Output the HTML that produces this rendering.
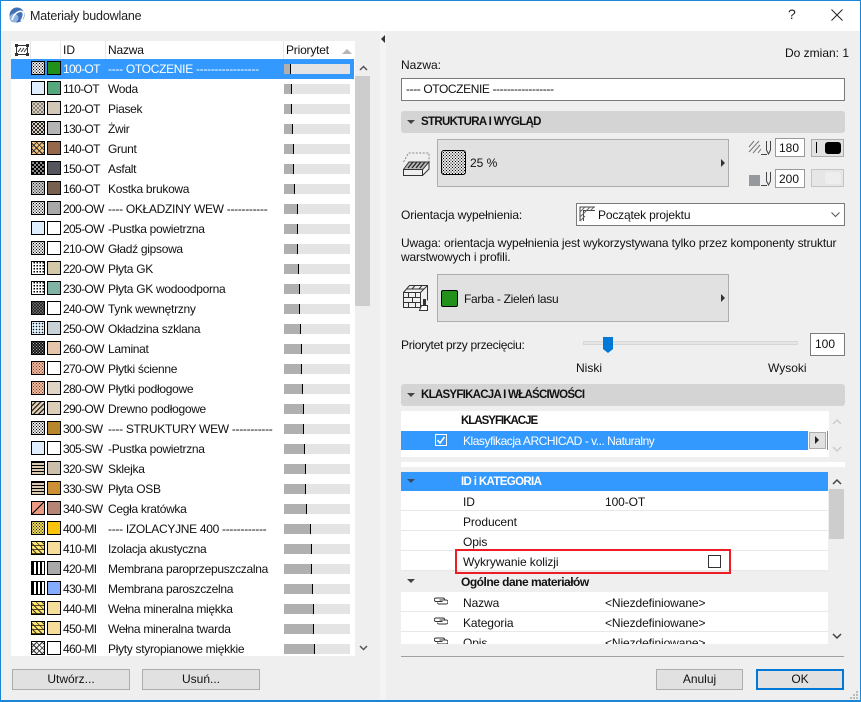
<!DOCTYPE html>
<html lang="pl"><head><meta charset="utf-8"><title>Materiały budowlane</title>
<style>
*{box-sizing:border-box}
html,body{margin:0;padding:0;width:861px;height:702px;overflow:hidden;background:#efefef}
body{font:12px/14px "Liberation Sans",sans-serif;color:#111;position:relative}
.a,.t{position:absolute}
.t{white-space:nowrap}
#win{position:absolute;left:0;top:0;width:861px;height:702px;border:1px solid #1b85d6;border-width:1px 1px 2px 1px;pointer-events:none}
.row{position:absolute;left:11px;width:344px;height:20px}
.s{position:absolute;top:2px;width:14px;height:14px;border:1px solid #000}
.s1{left:20px}.s2{left:36px}
.id{position:absolute;left:52px;top:3px;font-size:12px;letter-spacing:-.65px;white-space:nowrap}
.n{position:absolute;left:97px;top:3px;white-space:nowrap;letter-spacing:-.3px}
.bar{position:absolute;left:273px;top:5px;width:66px;height:10px;background:#e4e4e4}
.bar i{position:absolute;left:0;top:0;height:10px;background:#b0b0b0;border-right:1px solid #000}
.dots{background:radial-gradient(circle,#000 .5px,transparent .85px) 0 0/3px 3px,radial-gradient(circle,#000 .5px,transparent .85px) 1.5px 1.5px/3px 3px,#fff}
.dots-g{background:radial-gradient(circle,#222 .55px,transparent .85px) 0 0/3px 3px,radial-gradient(circle,#222 .55px,transparent .85px) 1.5px 1.5px/3px 3px,#ddd}
.sand{background:radial-gradient(circle,#222 .6px,transparent .9px) 0 0/4px 4px,radial-gradient(circle,#222 .6px,transparent .9px) 2px 2px/4px 4px,#d8ccbb}
.grav{background:radial-gradient(circle,#111 .9px,transparent 1.2px) 0 0/4px 4px,radial-gradient(circle,#111 .9px,transparent 1.2px) 2px 2px/4px 4px,#d8d0c4}
.cross{background:repeating-linear-gradient(45deg,transparent 0 3px,#222 3px 4px),repeating-linear-gradient(135deg,transparent 0 3px,#444 3px 4px),#f5c47a}
.chk{background:conic-gradient(#000 25%,#888 0 50%,#000 0 75%,#888 0) 0 0/4px 4px}
.grid{background:conic-gradient(#000 25%,#fff 0) 0 0/3px 3px}
.gray{background:radial-gradient(circle,#111 .8px,transparent 1.1px) 0 0/3px 3px,radial-gradient(circle,#111 .8px,transparent 1.1px) 1.5px 1.5px/3px 3px,#bbb}
.glass{background:radial-gradient(circle,#111 .6px,transparent .9px) 0 0/3px 3px,#e2f2fc}
.lam{background:radial-gradient(circle,#aaa .5px,transparent .9px) 0 0/3px 3px,radial-gradient(circle,#aaa .5px,transparent .9px) 1.5px 1.5px/3px 3px,#000}
.tile{background:radial-gradient(circle,#733 .5px,transparent .85px) 0 0/3px 3px,radial-gradient(circle,#733 .5px,transparent .85px) 1.5px 1.5px/3px 3px,#fccba6}
.wood{background:repeating-linear-gradient(135deg,#e4d0bc 0 2px,#332 2px 3.500px)}
.lines{background:repeating-linear-gradient(180deg,#000 0 1px,#d8c8b0 1px 3px)}
.vl{background:repeating-linear-gradient(90deg,#000 0 2px,#fff 2px 4px)}
.yel{background:radial-gradient(circle,#222 .5px,transparent .85px) 0 0/3px 3px,radial-gradient(circle,#222 .5px,transparent .85px) 1.5px 1.5px/3px 3px,#ffe85a}
.wool{background:repeating-linear-gradient(45deg,transparent 0 3px,#333 3px 4px) 0 0/100% 100%,repeating-linear-gradient(180deg,#ffe36a 0 3px,#5a4a10 3px 4px)}
.foam{background:repeating-linear-gradient(45deg,transparent 0 3px,#333 3px 4px),repeating-linear-gradient(135deg,transparent 0 3px,#333 3px 4px),#f4f4f4}
.btn{position:absolute;background:#e1e1e1;border:1px solid #adadad}
.btn2{position:absolute;background:#e1e1e1;border:1px solid #adadad;text-align:center;line-height:19px}
.inp{position:absolute;background:#fff;border:1px solid #7a7a7a}
.sec{position:absolute;left:401px;width:444px;background:#d4d4d4;border-radius:3px;font-weight:bold;font-size:11.5px}
.tri{position:absolute;width:0;height:0;border-left:4px solid transparent;border-right:4px solid transparent;border-top:4px solid #444}
.rtri{position:absolute;width:0;height:0;border-top:4px solid transparent;border-bottom:4px solid transparent;border-left:4px solid #333}
.pr{position:absolute;left:401px;width:427px;height:20px;background:#fff;border-bottom:1px solid #e8e8e8}
.pr .l{position:absolute;left:62px;top:4px;white-space:nowrap;letter-spacing:-.1px}
.pr .v{position:absolute;left:204px;top:4px;white-space:nowrap;letter-spacing:-.1px}
</style></head><body>

<!-- title bar -->
<div class="a" style="left:0;top:0;width:861px;height:31px;background:#fff"></div>
<svg class="a" style="left:9px;top:7px" width="18" height="18" viewBox="0 0 18 18"><circle cx="8" cy="8" r="7.500" fill="#3f6fb5"/><circle cx="5" cy="11" r="4.500" fill="#8fb3e0"/><path d="M3 13C5 6 10 3 14 5 15 8 14 11 12 14" fill="none" stroke="#fff" stroke-width="1.600"/></svg>
<div class="t" style="left:30px;top:9px;font-size:12.5px;color:#222;letter-spacing:-.17px">Materiały budowlane</div>
<div class="t" style="left:788px;top:7px;font-size:14px;color:#222">?</div>
<svg class="a" style="left:831px;top:9px" width="12" height="12"><path d="M.5.5l11 11M11.5.5l-11 11" stroke="#222" fill="none"/></svg>

<!-- left list -->
<div class="a" style="left:11px;top:41px;width:344px;height:615px;background:#fff"></div>
<div class="a" style="left:30px;top:41px;width:1px;height:18px;background:#e8e8e8"></div>
<div class="a" style="left:60px;top:41px;width:1px;height:18px;background:#e8e8e8"></div>
<div class="a" style="left:105px;top:41px;width:1px;height:18px;background:#e8e8e8"></div>
<div class="a" style="left:283px;top:41px;width:1px;height:18px;background:#e8e8e8"></div>
<svg class="a" style="left:15px;top:44px" width="14" height="12"><rect x="1.500" y="1.500" width="11" height="9" fill="#fff" stroke="#333"/><path d="M3 8l3-4M6 8l3-4M9 8l3-4" stroke="#333"/><path d="M0 0h3v3H0zM11 0h3v3h-3zM0 9h3v3H0zM11 9h3v3h-3z" fill="#333"/></svg>
<div class="t" style="left:63px;top:43px">ID</div>
<div class="t" style="left:108px;top:43px;letter-spacing:-.2px">Nazwa</div>
<div class="t" style="left:286px;top:43px;letter-spacing:-.2px">Priorytet</div>
<div class="a" style="left:342px;top:49px;width:0;height:0;border-left:5px solid transparent;border-right:5px solid transparent;border-bottom:5px solid #b5b5b5"></div>

<div class="row" style="top:59px;background:#3399ff;color:#fff;width:343px"><div class="s s1 dots"></div><div class="s s2" style="background:#21911c"></div><div class="id" style="color:#fff">100-OT</div><div class="n">---- OTOCZENIE -----------------</div><div class="bar"><i style="width:7px"></i></div></div>
<div class="row" style="top:79px"><div class="s s1" style="background:#dfeeff"></div><div class="s s2" style="background:#55a87e"></div><div class="id">110-OT</div><div class="n">Woda</div><div class="bar"><i style="width:8px"></i></div></div>
<div class="row" style="top:99px"><div class="s s1 sand"></div><div class="s s2" style="background:#d3c8b8"></div><div class="id">120-OT</div><div class="n">Piasek</div><div class="bar"><i style="width:8px"></i></div></div>
<div class="row" style="top:119px"><div class="s s1 grav"></div><div class="s s2" style="background:#b4b4b4"></div><div class="id">130-OT</div><div class="n">Żwir</div><div class="bar"><i style="width:9px"></i></div></div>
<div class="row" style="top:139px"><div class="s s1 cross"></div><div class="s s2" style="background:#96674a"></div><div class="id">140-OT</div><div class="n">Grunt</div><div class="bar"><i style="width:10px"></i></div></div>
<div class="row" style="top:159px"><div class="s s1 chk"></div><div class="s s2" style="background:#53565c"></div><div class="id">150-OT</div><div class="n">Asfalt</div><div class="bar"><i style="width:10px"></i></div></div>
<div class="row" style="top:179px"><div class="s s1 dots-g"></div><div class="s s2" style="background:#78604e"></div><div class="id">160-OT</div><div class="n">Kostka brukowa</div><div class="bar"><i style="width:11px"></i></div></div>
<div class="row" style="top:199px"><div class="s s1 dots"></div><div class="s s2" style="background:#a8a8a8"></div><div class="id">200-OW</div><div class="n">---- OKŁADZINY WEW -----------</div><div class="bar"><i style="width:14px"></i></div></div>
<div class="row" style="top:219px"><div class="s s1" style="background:#dfeeff"></div><div class="s s2" style="background:#fff"></div><div class="id">205-OW</div><div class="n">-Pustka powietrzna</div><div class="bar"><i style="width:14px"></i></div></div>
<div class="row" style="top:239px"><div class="s s1 dots"></div><div class="s s2" style="background:#fff"></div><div class="id">210-OW</div><div class="n">Gładź gipsowa</div><div class="bar"><i style="width:14px"></i></div></div>
<div class="row" style="top:259px"><div class="s s1 grid"></div><div class="s s2" style="background:#d3c8a8"></div><div class="id">220-OW</div><div class="n">Płyta GK</div><div class="bar"><i style="width:15px"></i></div></div>
<div class="row" style="top:279px"><div class="s s1 grid"></div><div class="s s2" style="background:#7fb3a3"></div><div class="id">230-OW</div><div class="n">Płyta GK wodoodporna</div><div class="bar"><i style="width:16px"></i></div></div>
<div class="row" style="top:299px"><div class="s s1 gray"></div><div class="s s2" style="background:#fff"></div><div class="id">240-OW</div><div class="n">Tynk wewnętrzny</div><div class="bar"><i style="width:16px"></i></div></div>
<div class="row" style="top:319px"><div class="s s1 glass"></div><div class="s s2" style="background:#c8d2d6"></div><div class="id">250-OW</div><div class="n">Okładzina szklana</div><div class="bar"><i style="width:17px"></i></div></div>
<div class="row" style="top:339px"><div class="s s1 lam"></div><div class="s s2" style="background:#e6c6aa"></div><div class="id">260-OW</div><div class="n">Laminat</div><div class="bar"><i style="width:18px"></i></div></div>
<div class="row" style="top:359px"><div class="s s1 tile"></div><div class="s s2" style="background:#fff"></div><div class="id">270-OW</div><div class="n">Płytki ścienne</div><div class="bar"><i style="width:18px"></i></div></div>
<div class="row" style="top:379px"><div class="s s1 tile"></div><div class="s s2" style="background:#e0d4c6"></div><div class="id">280-OW</div><div class="n">Płytki podłogowe</div><div class="bar"><i style="width:19px"></i></div></div>
<div class="row" style="top:399px"><div class="s s1 wood"></div><div class="s s2" style="background:#dccdb8"></div><div class="id">290-OW</div><div class="n">Drewno podłogowe</div><div class="bar"><i style="width:20px"></i></div></div>
<div class="row" style="top:419px"><div class="s s1 dots"></div><div class="s s2" style="background:#b8862c"></div><div class="id">300-SW</div><div class="n">---- STRUKTURY WEW -----------</div><div class="bar"><i style="width:20px"></i></div></div>
<div class="row" style="top:439px"><div class="s s1" style="background:#dfeeff"></div><div class="s s2" style="background:#fff"></div><div class="id">305-SW</div><div class="n">-Pustka powietrzna</div><div class="bar"><i style="width:21px"></i></div></div>
<div class="row" style="top:459px"><div class="s s1 lines"></div><div class="s s2" style="background:#cbbfac"></div><div class="id">320-SW</div><div class="n">Sklejka</div><div class="bar"><i style="width:22px"></i></div></div>
<div class="row" style="top:479px"><div class="s s1 lines"></div><div class="s s2" style="background:#cc8f33"></div><div class="id">330-SW</div><div class="n">Płyta OSB</div><div class="bar"><i style="width:22px"></i></div></div>
<div class="row" style="top:499px"><div class="s s1" style="background:linear-gradient(135deg,#e99a80 0 47%,#000 47% 53%,#e99a80 53%)"></div><div class="s s2" style="background:#b58474"></div><div class="id">340-SW</div><div class="n">Cegła kratówka</div><div class="bar"><i style="width:23px"></i></div></div>
<div class="row" style="top:519px"><div class="s s1 yel"></div><div class="s s2" style="background:#fcc30c"></div><div class="id">400-MI</div><div class="n">---- IZOLACYJNE 400 ------------</div><div class="bar"><i style="width:27px"></i></div></div>
<div class="row" style="top:539px"><div class="s s1 wool"></div><div class="s s2" style="background:#f6dd9a"></div><div class="id">410-MI</div><div class="n">Izolacja akustyczna</div><div class="bar"><i style="width:28px"></i></div></div>
<div class="row" style="top:559px"><div class="s s1 vl"></div><div class="s s2" style="background:#a9a9a9"></div><div class="id">420-MI</div><div class="n">Membrana paroprzepuszczalna</div><div class="bar"><i style="width:28px"></i></div></div>
<div class="row" style="top:579px"><div class="s s1 vl"></div><div class="s s2" style="background:#84adff"></div><div class="id">430-MI</div><div class="n">Membrana paroszczelna</div><div class="bar"><i style="width:29px"></i></div></div>
<div class="row" style="top:599px"><div class="s s1 wool"></div><div class="s s2" style="background:#f6dd9a"></div><div class="id">440-MI</div><div class="n">Wełna mineralna miękka</div><div class="bar"><i style="width:30px"></i></div></div>
<div class="row" style="top:619px"><div class="s s1 wool"></div><div class="s s2" style="background:#f6dd9a"></div><div class="id">450-MI</div><div class="n">Wełna mineralna twarda</div><div class="bar"><i style="width:30px"></i></div></div>
<div class="row" style="top:639px;height:17px"><div class="s s1 foam"></div><div class="s s2" style="background:#fff"></div><div class="id">460-MI</div><div class="n">Płyty styropianowe miękkie</div><div class="bar"><i style="width:31px"></i></div></div>

<!-- left scrollbar -->
<div class="a" style="left:355px;top:76px;width:15px;height:230px;background:#cdcdcd"></div>
<svg class="a" style="left:359px;top:65px" width="9" height="6"><path d="M1 5l3.500-3.500L8 5" fill="none" stroke="#555" stroke-width="1.500"/></svg>
<svg class="a" style="left:359px;top:645px" width="9" height="6"><path d="M1 1l3.500 3.500L8 1" fill="none" stroke="#555" stroke-width="1.500"/></svg>

<div class="btn2" style="left:12px;top:669px;width:118px;height:21px">Utwórz...</div>
<div class="btn2" style="left:142px;top:669px;width:118px;height:21px">Usuń...</div>

<div class="a" style="left:380px;top:31px;width:6px;height:669px;background:#f4f4f4"></div>
<div class="a" style="left:381px;top:35px;width:0;height:0;border-top:4px solid transparent;border-bottom:4px solid transparent;border-right:4px solid #333"></div>

<!-- right -->
<div class="t" style="left:785px;top:46px;width:60px;text-align:right">Do zmian: 1</div>
<div class="t" style="left:401px;top:58px">Nazwa:</div>
<div class="inp" style="left:401px;top:78px;width:444px;height:23px;padding:3px 4px;letter-spacing:-.4px">---- OTOCZENIE -----------------</div>

<div class="sec" style="top:111px;height:22px"><div class="tri" style="left:6px;top:9px"></div><div class="t" style="left:20px;top:4px;letter-spacing:-.67px">STRUKTURA I WYGLĄD</div></div>

<svg class="a" style="left:403px;top:151px" width="27" height="26" viewBox="0 0 27 26"><path d="M.5 11L5.500 2H26V11" fill="none" stroke="#888" stroke-dasharray="2 1.500"/><path d="M.5 18L6 11H26L19 18z" fill="#bbb"/><path d="M5 17l5-6M9 17l5-6M13 17l5-6M17 17l5-6" stroke="#222" stroke-width="1.300"/><path d="M.5 18.500h19v6h-19zM19.500 24.500L26 18V11M19.500 18.500L26 11H6L.5 18.500" fill="none" stroke="#333"/></svg>
<div class="btn" style="left:437px;top:139px;width:292px;height:48px"></div>
<div class="a dots" style="left:441px;top:150px;width:25px;height:25px;border:1px solid #000;border-radius:3px"></div>
<div class="t" style="left:470px;top:156px">25 %</div>
<div class="rtri" style="left:721px;top:159px"></div>

<svg class="a" style="left:748px;top:138px" width="26" height="50" viewBox="0 0 26 50"><path d="M1 9l5-6M1 14l10-11M5 15l7-8M10 15l3-4" stroke="#777" fill="none"/><path d="M13 16.500h6M18.500 3v9l2 4 2-4V3" stroke="#444" fill="none"/><rect x="1" y="37" width="11" height="11" fill="#95989c"/><path d="M13 47.500h6M18.500 34v9l2 4 2-4v-9" stroke="#444" fill="none"/></svg>
<div class="inp" style="left:775px;top:138px;width:30px;height:19px;padding:2px 3px;border-color:#999">180</div>
<div class="btn" style="left:811px;top:139px;width:33px;height:18px"></div>
<div class="a" style="left:816px;top:142px;width:1px;height:11px;background:#000"></div>
<div class="a" style="left:825px;top:142px;width:16px;height:12px;background:#000;border-radius:3px"></div>
<div class="inp" style="left:775px;top:169px;width:30px;height:19px;padding:2px 3px;border-color:#999">200</div>
<div class="btn" style="left:811px;top:169px;width:33px;height:18px;background:#e6e6e6;border-color:#c4c4c4"></div>
<div class="a" style="left:825px;top:172px;width:16px;height:12px;background:#eeeeee;border-radius:3px"></div>

<div class="t" style="left:401px;top:208px;letter-spacing:-.13px">Orientacja wypełnienia:</div>
<div class="inp" style="left:576px;top:203px;width:269px;height:23px"></div>
<svg class="a" style="left:579px;top:206px" width="18" height="16"><path d="M1 15V1h15M4.500 15V4.500h11.500" stroke="#444" fill="none"/><path d="M1 6l5-5M1 11l10-10M1 15l5-5M6 6l5-5M11 5l4-4" stroke="#666" fill="none"/></svg>
<div class="t" style="left:598px;top:208px;letter-spacing:-.18px">Początek projektu</div>
<svg class="a" style="left:831px;top:212px" width="9" height="6"><path d="M.5.500L4.500 4.500 8.500.500" fill="none" stroke="#555"/></svg>

<div class="t" style="left:401px;top:236px;letter-spacing:-.15px">Uwaga: orientacja wypełnienia jest wykorzystywana tylko przez komponenty struktur</div>
<div class="t" style="left:401px;top:250px;letter-spacing:-.15px">warstwowych i profili.</div>

<svg class="a" style="left:403px;top:284px" width="28" height="28" viewBox="0 0 28 28"><path d="M.5 8.500h17v15H.5zM.5 8.500l6-7h18v15M17.500 8.500l7-7M.5 13.500h17M.5 18.500h17M5.500 8.500v5M12.500 8.500v5M9.500 13.500v5M5.500 18.500v5M12.500 18.500v5M4 5h17M12 1.500l-3 3.500M19 1.500l-3 3.500" fill="none" stroke="#333"/><rect x="20" y="15" width="3" height="6" fill="#333"/><path d="M18.500 21.500h6v5h-8z" fill="#fff" stroke="#333"/></svg>
<div class="btn" style="left:437px;top:274px;width:292px;height:48px"></div>
<div class="a" style="left:441px;top:290px;width:17px;height:17px;background:#21911c;border:1px solid #000;border-radius:2px"></div>
<div class="t" style="left:464px;top:292px;letter-spacing:-.3px">Farba - Zieleń lasu</div>
<div class="rtri" style="left:721px;top:294px"></div>

<div class="t" style="left:401px;top:338px;letter-spacing:-.3px">Priorytet przy przecięciu:</div>
<div class="a" style="left:583px;top:341px;width:215px;height:4px;background:#e6e6e6;border:1px solid #d6d6d6"></div>
<svg class="a" style="left:603px;top:337px" width="10" height="16"><path d="M0 0h10v12l-5 4-5-4z" fill="#0078d7"/></svg>
<div class="inp" style="left:810px;top:333px;width:35px;height:23px;padding:3px 4px">100</div>
<div class="t" style="left:576px;top:361px">Niski</div>
<div class="t" style="left:768px;top:361px">Wysoki</div>

<div class="sec" style="top:384px;height:22px"><div class="tri" style="left:6px;top:9px"></div><div class="t" style="left:20px;top:4px;letter-spacing:-.73px">KLASYFIKACJA I WŁAŚCIWOŚCI</div></div>

<!-- classification -->
<div class="a" style="left:401px;top:411px;width:428px;height:46px;background:#fff"></div>
<div class="t" style="left:461px;top:414px;font-weight:bold;font-size:11.5px;letter-spacing:-1px">KLASYFIKACJE</div>
<div class="a" style="left:401px;top:431px;width:407px;height:19px;background:#3399ff"></div>
<div class="a" style="left:827px;top:431px;width:1px;height:19px;background:#3399ff"></div>
<svg class="a" style="left:435px;top:434px" width="12" height="12"><rect x=".5" y=".5" width="11" height="11" fill="none" stroke="#fff"/><path d="M2.500 6l2.500 3 4.500-6" fill="none" stroke="#fff" stroke-width="1.500"/></svg>
<div class="t" style="left:463px;top:434px;color:#fff;letter-spacing:-.47px">Klasyfikacja ARCHICAD - v... Naturalny</div>
<div class="btn" style="left:809px;top:432px;width:17px;height:17px"></div>
<div class="rtri" style="left:815px;top:436px;border-left-color:#222"></div>
<svg class="a" style="left:832px;top:418px" width="10" height="7"><path d="M1 6l4-4 4 4" fill="none" stroke="#ccc" stroke-width="1.500"/></svg>
<svg class="a" style="left:832px;top:446px" width="10" height="7"><path d="M1 1l4 4 4-4" fill="none" stroke="#ccc" stroke-width="1.500"/></svg>
<div class="a" style="left:401px;top:462px;width:444px;height:5px;background:#fff"></div>

<!-- properties -->
<div class="a" style="left:401px;top:472px;width:427px;height:172px;background:#fff"></div>
<div class="a" style="left:401px;top:472px;width:427px;height:19px;background:#3399ff"></div>
<div class="tri" style="left:407px;top:479px;border-top-color:#3a4a5c"></div>
<div class="t" style="left:461px;top:475px;font-weight:bold;font-size:11.5px;color:#fff;letter-spacing:-.64px">ID i KATEGORIA</div>
<div class="pr" style="top:491px"><div class="l">ID</div><div class="v">100-OT</div></div>
<div class="pr" style="top:511px"><div class="l">Producent</div></div>
<div class="pr" style="top:531px"><div class="l">Opis</div></div>
<div class="pr" style="top:551px"><div class="l">Wykrywanie kolizji</div></div>
<div class="a" style="left:401px;top:571px;width:427px;height:21px;background:#efefef"></div>
<div class="tri" style="left:407px;top:579px"></div>
<div class="t" style="left:461px;top:575px;font-weight:bold;letter-spacing:-.5px">Ogólne dane materiałów</div>
<div class="pr" style="top:592px"><div class="l">Nazwa</div><div class="v">&lt;Niezdefiniowane&gt;</div></div>
<div class="pr" style="top:612px"><div class="l">Kategoria</div><div class="v">&lt;Niezdefiniowane&gt;</div></div>
<div class="pr" style="top:632px;height:12px;overflow:hidden;border:0"><div class="l">Opis</div><div class="v">&lt;Niezdefiniowane&gt;</div></div>
<svg class="a" style="left:434px;top:597px" width="14" height="8"><path d="M8.500 4.500H2a1.500 1.500 0 0 1 0-3.500h7a1.500 1.500 0 0 1 1.500 1.500M5.500 3H12a1.500 1.500 0 0 1 0 4H5a1.500 1.500 0 0 1-1.500-1.500" fill="none" stroke="#333"/></svg>
<svg class="a" style="left:434px;top:617px" width="14" height="8"><path d="M8.500 4.500H2a1.500 1.500 0 0 1 0-3.500h7a1.500 1.500 0 0 1 1.500 1.500M5.500 3H12a1.500 1.500 0 0 1 0 4H5a1.500 1.500 0 0 1-1.500-1.500" fill="none" stroke="#333"/></svg>
<svg class="a" style="left:434px;top:637px" width="14" height="7"><path d="M8.500 4.500H2a1.500 1.500 0 0 1 0-3.500h7a1.500 1.500 0 0 1 1.500 1.500M5.500 3H12a1.500 1.500 0 0 1 0 4H5a1.500 1.500 0 0 1-1.500-1.500" fill="none" stroke="#333"/></svg>

<div class="a" style="left:829px;top:489px;width:15px;height:50px;background:#cdcdcd"></div>
<svg class="a" style="left:832px;top:478px" width="10" height="7"><path d="M1 6l4-4 4 4" fill="none" stroke="#444" stroke-width="1.500"/></svg>
<svg class="a" style="left:832px;top:633px" width="10" height="7"><path d="M1 1l4 4 4-4" fill="none" stroke="#444" stroke-width="1.500"/></svg>

<div class="a" style="left:455px;top:549px;width:276px;height:25px;border:2px solid #ee1c25"></div>
<div class="a" style="left:708px;top:555px;width:13px;height:13px;background:#fff;border:1px solid #333"></div>

<div class="a" style="left:401px;top:656px;width:443px;height:1px;background:#a0a0a0"></div>
<div class="btn2" style="left:656px;top:669px;width:87px;height:21px">Anuluj</div>
<div class="btn2" style="left:756px;top:669px;width:88px;height:21px;border:2px solid #0078d7;line-height:17px">OK</div>
<svg class="a" style="left:849px;top:690px" width="10" height="10"><path d="M7 1h2v2H7zM4 4h2v2H4zM7 4h2v2H7zM1 7h2v2H1zM4 7h2v2H4zM7 7h2v2H7z" fill="#bbb"/></svg>

<div id="win"></div>
</body></html>
